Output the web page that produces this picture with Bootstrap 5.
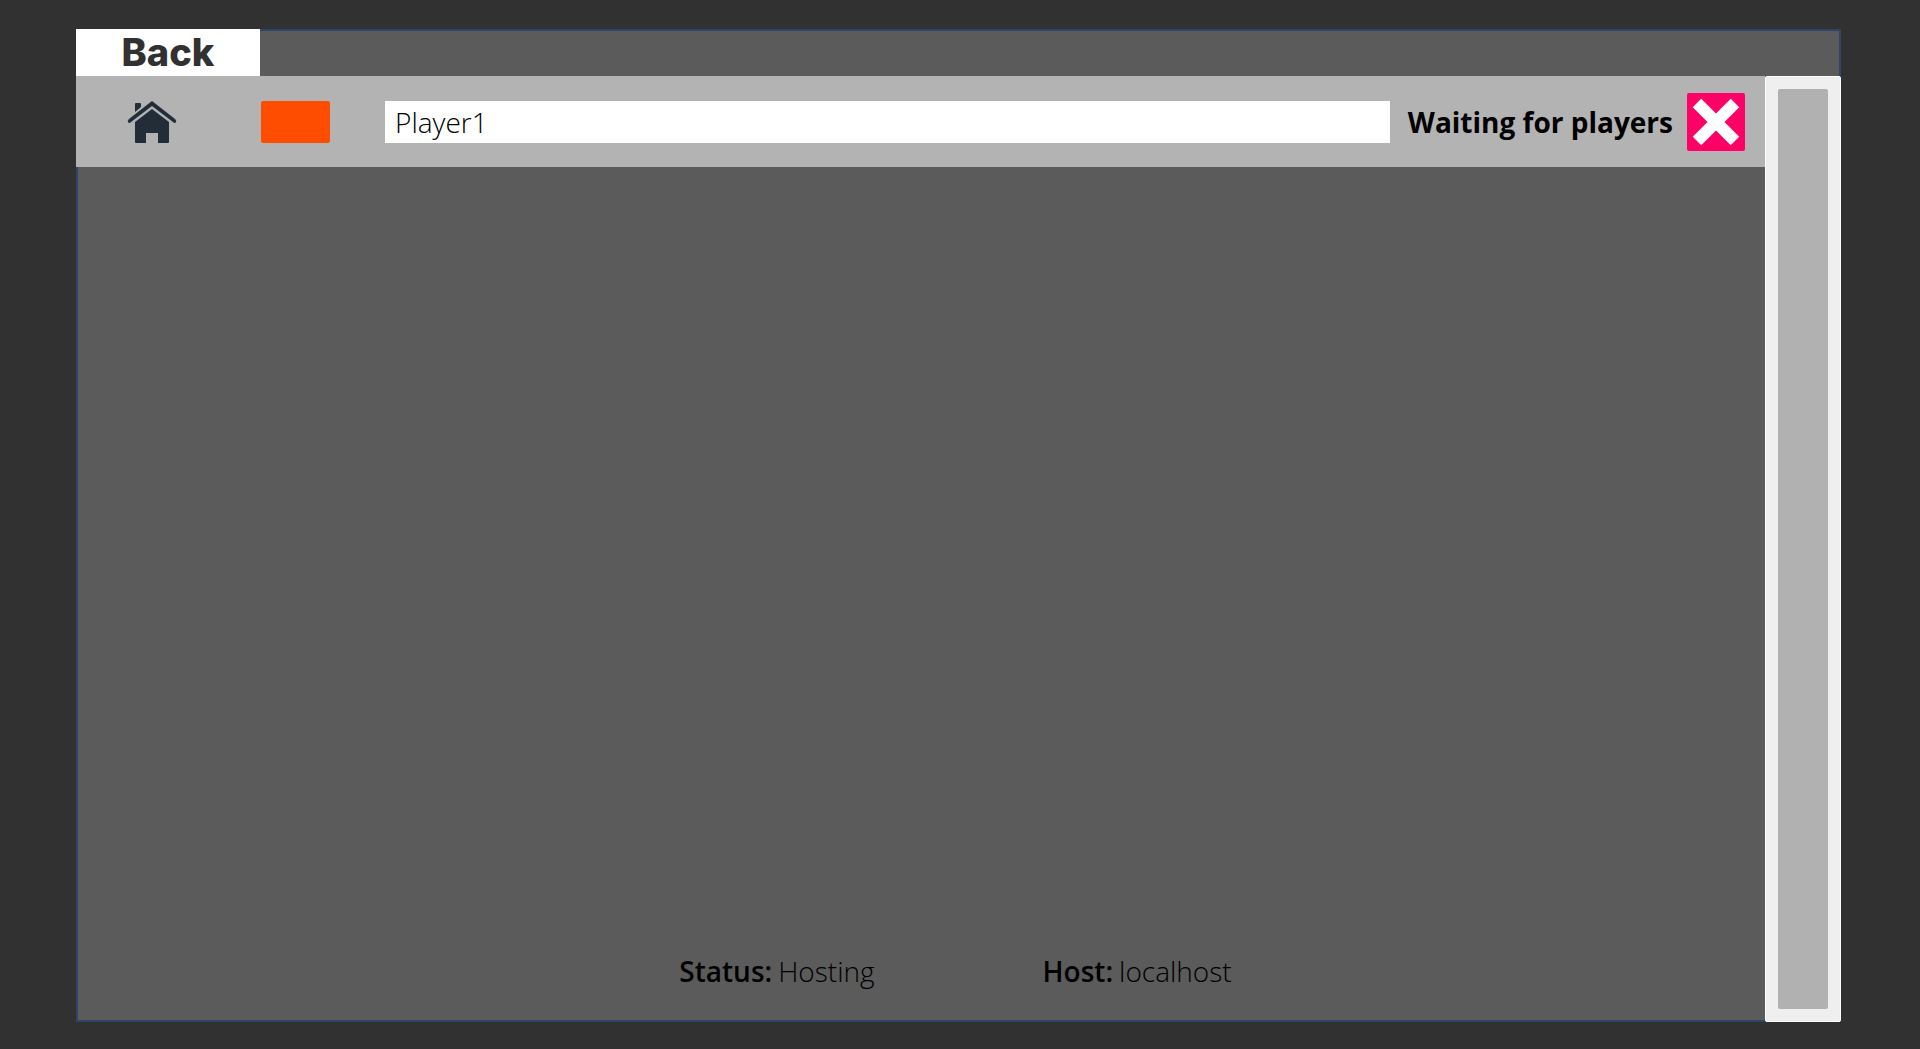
<!DOCTYPE html>
<html lang="en">
<head>
<meta charset="utf-8">
<meta name="viewport" content="width=device-width, initial-scale=1">
<title>Lobby</title>
<link rel="stylesheet" href="https://cdn.jsdelivr.net/npm/bootstrap@5.3.0/dist/css/bootstrap.min.css">
<style>
  body { background: #313131; color: #000; font-family: "Open Sans", "Noto Sans", sans-serif; font-size: 28px; line-height: 38px; }
  .lobby { padding: 29px 79px 27px 76px; }
  .lobby-frame { background: #5b5b5b; box-shadow: inset 0 0 0 2px #2f446b; }
  .back-btn { width: 184px; height: 47px; background: #fff; color: #313131; font: 800 38px/47px Inter, "Open Sans", sans-serif; }
  .player-bar { height: 91px; background: #b3b3b3; padding: 0 20px 0 51px; }
  .home-icon { width: 50px; height: 42px; fill: #222d38; }
  .team-color { width: 69px; height: 42px; background: #ff4d00; border-radius: 2px; margin: 0 55px 0 84px; }
  .name-box { height: 42px; background: #fff; color: #000; font-weight: 300; padding: 0 10px; min-width: 0; margin-right: 18px; }
  .kick-btn { width: 58px; height: 58px; background: #ff0066; border-radius: 2px; margin-left: 14px; }
  .scroll-track { width: 76px; background: #efefef; border: 1px solid #fff; border-radius: 2px; padding: 12px; }
  .scroll-thumb { background: #b1b1b1; border-radius: 2px; }
  .status-line { padding: 0 0 32px 70px; gap: 168px; }
  .status-pair { gap: 6px; }
  .status-line dt { font-weight: 600; }
  .status-line dd { font-weight: 300; }
</style>
<script src="https://cdn.jsdelivr.net/npm/bootstrap@5.3.0/dist/js/bootstrap.bundle.min.js" defer></script>
</head>
<body>
<main class="lobby d-flex min-vh-100">
  <section class="lobby-frame d-flex flex-column flex-grow-1">
    <button type="button" class="back-btn border-0 p-0 align-self-start">Back</button>
    <div class="d-flex flex-grow-1">
      <div class="d-flex flex-column justify-content-between flex-grow-1">
        <form class="player-bar d-flex align-items-center">
          <svg class="home-icon flex-shrink-0" viewBox="0 0 50 42" role="img" aria-label="Host">
            <path d="M8 3q0-1 1-1h4q1 0 1 1v3l-6 5z"/>
            <path d="M25 0 2 18q-2 2-1 3 1 2 3 0L25 5l21 16q2 2 3 0 1-1-1-3z"/>
            <path d="M25 8 42 21v20q0 1-1 1H31V32H19v10H9q-1 0-1-1V21z"/>
          </svg>
          <button type="button" class="team-color border-0 p-0 flex-shrink-0" aria-label="Player colour"></button>
          <input type="text" class="name-box border-0 rounded-0 flex-grow-1" value="Player1" aria-label="Player name">
          <span class="fw-bold text-nowrap">Waiting for players</span>
          <button type="button" class="kick-btn border-0 p-0 d-flex flex-shrink-0" aria-label="Remove player">
            <svg width="58" height="58" viewBox="0 0 58 58" aria-hidden="true"><path d="M10 10 48 48M48 10 10 48" stroke="#fff" stroke-width="12"/></svg>
          </button>
        </form>
        <dl class="status-line d-flex justify-content-center m-0">
          <div class="status-pair d-flex"><dt>Status:</dt><dd class="m-0">Hosting</dd></div>
          <div class="status-pair d-flex"><dt>Host:</dt><dd class="m-0">localhost</dd></div>
        </dl>
      </div>
      <div class="scroll-track d-flex flex-shrink-0">
        <div class="scroll-thumb flex-grow-1"></div>
      </div>
    </div>
  </section>
</main>
</body>
</html>
